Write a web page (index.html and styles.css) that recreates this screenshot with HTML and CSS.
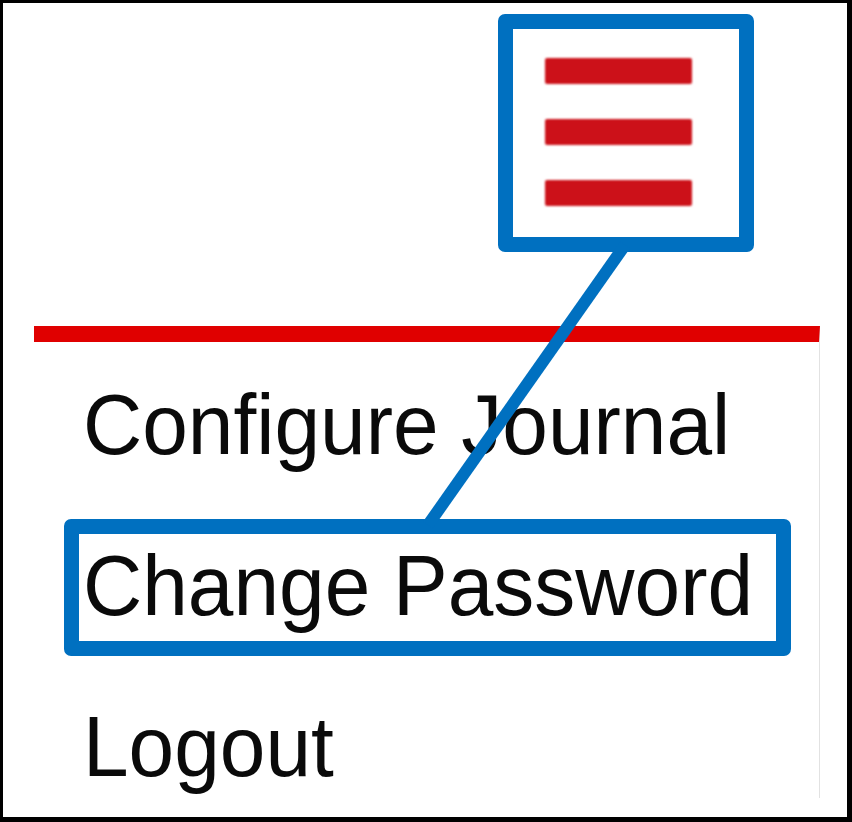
FILE: index.html
```html
<!DOCTYPE html>
<html lang="en">
<head>
<meta charset="utf-8">
<title>Menu</title>
<link rel="stylesheet" href="styles.css">
</head>
<body>
<div class="frame">
  <header class="topbar">
    <div class="hamburger" aria-label="Menu">
      <span class="bar"></span>
      <span class="bar"></span>
      <span class="bar"></span>
    </div>
  </header>
  <nav class="menu">
    <a class="menu-item" href="#"><span class="label">Configure Journal</span></a>
    <a class="menu-item" href="#"><span class="label">Change Password</span></a>
    <a class="menu-item" href="#"><span class="label">Logout</span></a>
  </nav>
  <div class="callout callout-icon"></div>
  <div class="callout callout-item"></div>
  <svg class="connector" width="844" height="814" viewBox="0 0 844 814" aria-hidden="true">
    <line x1="622" y1="242" x2="425" y2="522" stroke="#0070c0" stroke-width="12"/>
  </svg>
</div>
</body>
</html>
```

FILE: styles.css
```css
html, body {
  margin: 0;
  padding: 0;
  background: #ffffff;
}

.frame {
  position: relative;
  box-sizing: border-box;
  width: 852px;
  height: 822px;
  border-style: solid;
  border-color: #000000;
  border-width: 3px 5px 5px 3px;
  background: #ffffff;
  overflow: hidden;
  font-family: "Liberation Sans", Arial, sans-serif;
}

.topbar {
  box-sizing: border-box;
  height: 323px;
  padding: 55px 0 0 542px;
}

.hamburger {
  display: flex;
  flex-direction: column;
  gap: 35px;
  width: 147px;
}

.bar {
  display: block;
  height: 26px;
  background: #cc1119;
  border-radius: 2px;
  filter: blur(0.9px);
}

.menu {
  box-sizing: border-box;
  margin-left: 31px;
  width: 786px;
  height: 472px;
  border-top: 16px solid #e00000;
  border-right: 1px solid #e2e2e2;
  padding: 3px 0 0 49px;
  display: flex;
  flex-direction: column;
}

.menu-item {
  display: block;
  font-size: 82px;
  line-height: 161px;
  height: 161px;
  color: #0a0a0a;
  text-decoration: none;
  white-space: nowrap;
}

.label {
  display: inline-block;
  transform: scaleY(1.05);
  transform-origin: 0 109px;
}

.callout {
  position: absolute;
  box-sizing: border-box;
  border: 15px solid #0070c0;
  border-radius: 7px;
}

.callout-icon {
  left: 495px;
  top: 11px;
  width: 256px;
  height: 238px;
}

.callout-item {
  left: 61px;
  top: 516px;
  width: 727px;
  height: 137px;
}

.connector {
  position: absolute;
  left: 0;
  top: 0;
}
```
